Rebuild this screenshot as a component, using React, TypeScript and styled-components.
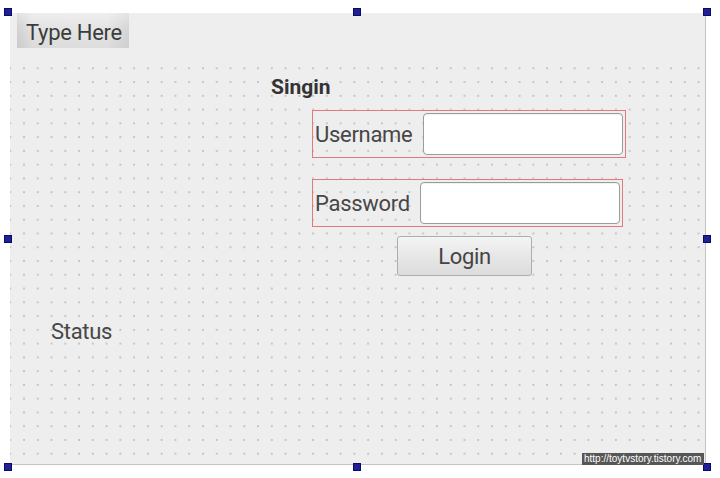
import React from "react";
import styled, { createGlobalStyle } from "styled-components";

const GlobalStyle = createGlobalStyle`
  html, body {
    margin: 0;
    padding: 0;
    background: #ffffff;
  }
  body {
    font-family: Roboto, "Liberation Sans", sans-serif;
    color: #444;
  }
`;

const GRID = 13.77;

const Stage = styled.div`
  position: relative;
  width: 720px;
  height: 478px;
  padding: 13px 0 0 10px;
  box-sizing: border-box;
`;

const Form = styled.div`
  width: 696px;
  height: 452px;
  box-sizing: border-box;
  background: #eeeeee;
  border-right: 1px solid #c4c4c4;
  border-bottom: 1px solid #c4c4c4;
  display: flex;
  flex-direction: column;
`;

const MenuBar = styled.div`
  height: 49px;
  flex: none;
  display: flex;
  align-items: flex-start;
  padding-left: 7px;
`;

const MenuItem = styled.div`
  width: 112px;
  height: 35px;
  box-sizing: border-box;
  padding: 4px 0 0 9px;
  display: flex;
  align-items: center;
  font-size: 22px;
  letter-spacing: -0.3px;
  color: #3c3c3c;
  background:
    linear-gradient(to bottom, rgba(255, 255, 255, 0.35), rgba(255, 255, 255, 0) 40%, rgba(0, 0, 0, 0.04)),
    linear-gradient(to right, #d2d2d2, #e4e4e4 14%, #e6e6e6 80%, #d6d6d6);
`;

const Body = styled.div`
  flex: 1;
  display: flex;
  flex-direction: column;
  align-items: flex-start;
  background-image: radial-gradient(circle at center, #c6c6c6 0 0.7px, transparent 1.2px);
  background-size: ${GRID}px ${GRID}px;
  background-position: -6.65px -0.6px;
`;

const Title = styled.div`
  margin: 13px 0 0 261px;
  font-size: 21px;
  line-height: 24px;
  font-weight: 700;
  color: #333;
`;

const Group = styled.div<{ $width: number; $top: number }>`
  margin: ${(p) => p.$top}px 0 0 302px;
  width: ${(p) => p.$width}px;
  height: 48px;
  box-sizing: border-box;
  border: 1px solid #e57878;
  display: flex;
  align-items: center;
  justify-content: space-between;
  padding: 0 2px;
`;

const Label = styled.span`
  font-size: 22px;
  letter-spacing: -0.3px;
  color: #474747;
`;

const Field = styled.input`
  width: 200px;
  height: 42px;
  box-sizing: border-box;
  border: 1px solid #9c9c9c;
  border-radius: 4px;
  background: #fff;
  box-shadow: inset 0 1px 1px rgba(0, 0, 0, 0.06);
  outline: none;
  padding: 0 6px;
  font-family: Roboto, sans-serif;
  font-size: 18px;
`;

const Button = styled.button`
  margin: 9px 0 0 387px;
  width: 135px;
  height: 40px;
  box-sizing: border-box;
  border: 1px solid #adadad;
  border-radius: 3px;
  background: linear-gradient(to bottom, #f4f4f4, #e6e6e6 55%, #dcdcdc);
  font-family: Roboto, "Liberation Sans", sans-serif;
  font-size: 22px;
  letter-spacing: -0.3px;
  color: #444;
  padding: 0;
  cursor: pointer;
`;

const Status = styled.div`
  margin: 43px 0 0 41px;
  font-size: 22px;
  line-height: 26px;
  letter-spacing: -0.3px;
  color: #474747;
`;

const Handle = styled.span<{ $x: number; $y: number }>`
  position: absolute;
  left: ${(p) => p.$x - 4}px;
  top: ${(p) => p.$y - 4}px;
  width: 8px;
  height: 8px;
  box-sizing: border-box;
  background: #1f1f96;
  border: 1px solid #0c0c5e;
`;

const Watermark = styled.div`
  position: absolute;
  left: 582px;
  top: 453px;
  width: 122px;
  height: 12px;
  background: #565656;
  color: #fff;
  font-family: "Liberation Sans", Arial, sans-serif;
  font-size: 10px;
  line-height: 12px;
  padding-left: 2px;
  box-sizing: border-box;
  white-space: nowrap;
`;

const handles = [
  [8, 12],
  [357, 12],
  [707, 12],
  [8, 239],
  [707, 239],
  [8, 467],
  [357, 467],
  [707, 467],
];

export default function App() {
  return (
    <>
      <GlobalStyle />
      <Stage>
        <Form>
          <MenuBar>
            <MenuItem>Type Here</MenuItem>
          </MenuBar>
          <Body>
            <Title>Singin</Title>
            <Group $width={314} $top={11}>
              <Label>Username</Label>
              <Field type="text" />
            </Group>
            <Group $width={311} $top={21}>
              <Label>Password</Label>
              <Field type="password" />
            </Group>
            <Button>Login</Button>
            <Status>Status</Status>
          </Body>
        </Form>
        {handles.map(([x, y], i) => (
          <Handle key={i} $x={x} $y={y} />
        ))}
        <Watermark>http://toytvstory.tistory.com</Watermark>
      </Stage>
    </>
  );
}
